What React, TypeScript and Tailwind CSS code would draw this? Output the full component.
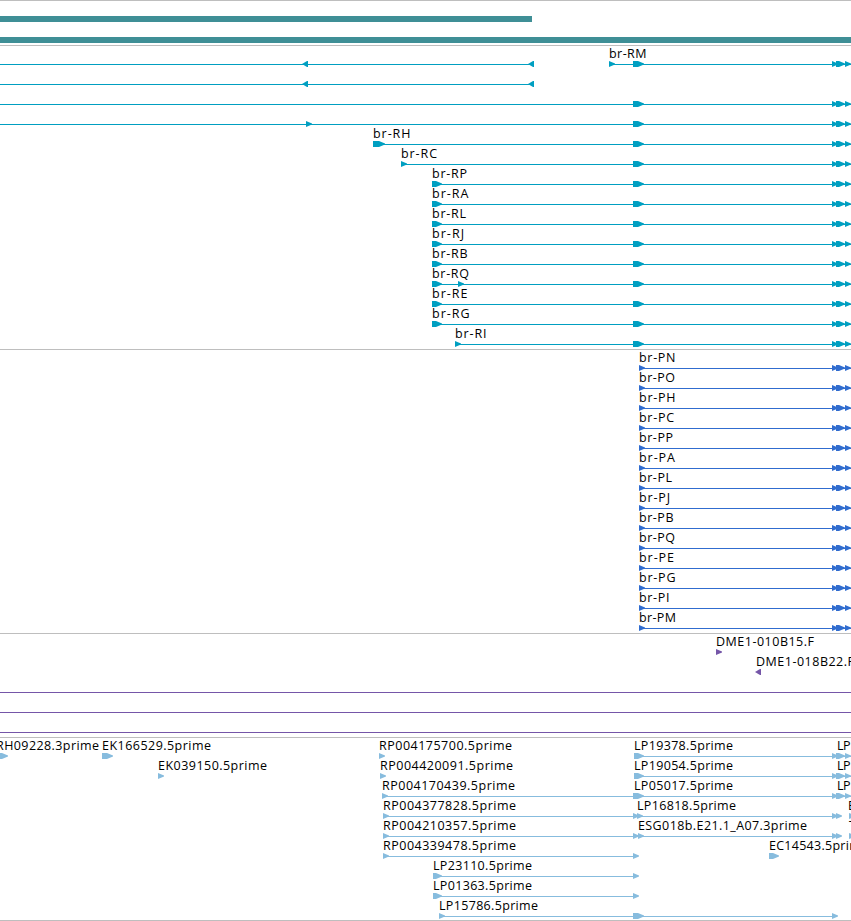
type Glyph = {
  x: number
  w?: number
  left?: boolean
}

type Label = {
  x: number
  w: number
  text: string
}

type Row = {
  labels?: Label[]
  lines?: [number, number][]
  glyphs?: Glyph[]
}

const WIDTH = 851

const acceptors: Glyph[] = [{ x: 832 }, { x: 836, w: 9 }, { x: 845 }]

const transcript = (name: string, w: number, x: number, first?: number, extra: Glyph[] = []): Row => ({
  labels: [{ x, w, text: name }],
  lines: [[x, WIDTH]],
  glyphs: [{ x, w: first }, ...extra, { x: 633, w: 11 }, ...acceptors],
})

const protein = (name: string, w: number): Row => ({
  labels: [{ x: 639, w, text: name }],
  lines: [[639, WIDTH]],
  glyphs: [{ x: 639 }, ...acceptors],
})

const transcripts: Row[] = [
  {
    labels: [{ x: 609, w: 37.5, text: "br-RM" }],
    lines: [[0, 534], [609, WIDTH]],
    glyphs: [{ x: 302, left: true }, { x: 528, left: true }, { x: 609 }, { x: 633, w: 11 }, ...acceptors],
  },
  { lines: [[0, 534]], glyphs: [{ x: 302, left: true }, { x: 528, left: true }] },
  { lines: [[0, WIDTH]], glyphs: [{ x: 633, w: 11 }, ...acceptors] },
  { lines: [[0, WIDTH]], glyphs: [{ x: 306 }, { x: 633, w: 11 }, ...acceptors] },
  transcript("br-RH", 37.5, 373, 12),
  transcript("br-RC", 36, 401),
  transcript("br-RP", 35, 432, 10),
  transcript("br-RA", 36.5, 432, 10),
  transcript("br-RL", 34, 432, 10),
  transcript("br-RJ", 32, 432, 10),
  transcript("br-RB", 35.5, 432, 10),
  transcript("br-RQ", 37, 432, 10, [{ x: 458 }]),
  transcript("br-RE", 35.5, 432, 10),
  transcript("br-RG", 37.5, 432, 10),
  transcript("br-RI", 31.5, 455),
]

const proteins: Row[] = [
  protein("br-PN", 36.5),
  protein("br-PO", 36),
  protein("br-PH", 36.5),
  protein("br-PC", 35),
  protein("br-PP", 34),
  protein("br-PA", 36),
  protein("br-PL", 33),
  protein("br-PJ", 31),
  protein("br-PB", 34.5),
  protein("br-PQ", 36),
  protein("br-PE", 35),
  protein("br-PG", 36.5),
  protein("br-PI", 30.5),
  protein("br-PM", 37),
]

const clones: Row[] = [
  { labels: [{ x: 716, w: 98, text: "DME1-010B15.F" }], glyphs: [{ x: 716 }] },
  { labels: [{ x: 756, w: 98, text: "DME1-018B22.F" }], glyphs: [{ x: 755, left: true }] },
  { lines: [[0, WIDTH]] },
  { lines: [[0, WIDTH]] },
  { lines: [[0, WIDTH]] },
]

const ests: Row[] = [
  {
    labels: [
      { x: -4, w: 103, text: "RH09228.3prime" },
      { x: 102, w: 109, text: "EK166529.5prime" },
      { x: 379, w: 133, text: "RP004175700.5prime" },
      { x: 634, w: 99, text: "LP19378.5prime" },
      { x: 837, w: 13.5, text: "LP" },
    ],
    lines: [[634, WIDTH]],
    glyphs: [{ x: -4, w: 12 }, { x: 102, w: 11 }, { x: 379 }, { x: 634, w: 10 }, ...acceptors],
  },
  {
    labels: [
      { x: 158, w: 109, text: "EK039150.5prime" },
      { x: 380, w: 133, text: "RP004420091.5prime" },
      { x: 634, w: 99, text: "LP19054.5prime" },
      { x: 837, w: 13.5, text: "LP" },
    ],
    lines: [[634, WIDTH]],
    glyphs: [{ x: 158 }, { x: 380 }, { x: 634, w: 10 }, ...acceptors],
  },
  {
    labels: [
      { x: 382, w: 133, text: "RP004170439.5prime" },
      { x: 634, w: 99, text: "LP05017.5prime" },
      { x: 837, w: 13.5, text: "LP" },
    ],
    lines: [[382, WIDTH]],
    glyphs: [{ x: 382 }, { x: 633, w: 11 }, ...acceptors],
  },
  {
    labels: [
      { x: 383, w: 133, text: "RP004377828.5prime" },
      { x: 637, w: 99, text: "LP16818.5prime" },
      { x: 848, w: 7, text: "E" },
    ],
    lines: [[383, 841]],
    glyphs: [{ x: 383 }, { x: 633 }, { x: 637 }, { x: 832 }, { x: 836 }, { x: 849 }],
  },
  {
    labels: [
      { x: 383, w: 133, text: "RP004210357.5prime" },
      { x: 638, w: 169, text: "ESG018b.E21.1_A07.3prime" },
      { x: 849, w: 7, text: "T" },
    ],
    lines: [[383, 841]],
    glyphs: [{ x: 383 }, { x: 633 }, { x: 638 }, { x: 832 }, { x: 836 }, { x: 849 }],
  },
  {
    labels: [
      { x: 383, w: 133, text: "RP004339478.5prime" },
      { x: 769, w: 99, text: "EC14543.5prime" },
    ],
    lines: [[383, 638]],
    glyphs: [{ x: 383 }, { x: 633 }, { x: 769, w: 10 }],
  },
  {
    labels: [{ x: 433, w: 99, text: "LP23110.5prime" }],
    lines: [[433, 638]],
    glyphs: [{ x: 433, w: 9 }, { x: 633 }],
  },
  {
    labels: [{ x: 433, w: 99, text: "LP01363.5prime" }],
    lines: [[433, 638]],
    glyphs: [{ x: 433, w: 9 }, { x: 633 }],
  },
  {
    labels: [{ x: 439, w: 99, text: "LP15786.5prime" }],
    lines: [[439, 837]],
    glyphs: [{ x: 439 }, { x: 633, w: 11 }, { x: 832 }],
  },
]

// 6px tall box, the last 6px taper to the point
const arrow = ({ x, w = 6, left }: Glyph) =>
  left
    ? `M${x + w} 15V21H${x + w - 1}L${x} 18L${x + w - 1} 15Z`
    : `M${x} 15H${x + w - 6}L${x + w} 17.5V18.5L${x + w - 6} 21H${x}Z`

const FeatureRow = ({ labels = [], lines = [], glyphs = [] }: Row) => (
  <svg className="block h-5 w-full overflow-visible fill-current">
    {lines.map(([from, to]) => (
      <rect key={from} x={from} y={18} width={to - from} height={1} />
    ))}
    {glyphs.map((g) => (
      <path key={g.x} d={arrow(g)} />
    ))}
    {labels.map((l) => (
      <text
        key={l.x}
        x={l.x}
        y={12}
        textLength={l.w}
        className="fill-black font-['Open_Sans',sans-serif] text-[12.5px]"
      >
        {l.text}
      </text>
    ))}
  </svg>
)

const Track = ({ rows, className }: { rows: Row[]; className: string }) => (
  <section className={`border-t border-t-[#bebebe] ${className}`}>
    {rows.map((row, i) => (
      <FeatureRow key={i} {...row} />
    ))}
  </section>
)

const App = () => {
  return (
    <main className="w-[851px] h-[921px] overflow-hidden bg-white">
      <section className="flex flex-col gap-[15px] h-[45px] border-t border-[#bebebe] pt-[15px]">
        <div className="h-1.5 w-[532px] shrink-0 bg-[#3f8f96]" />
        <div className="h-1.5 w-full shrink-0 bg-[#3f8f96]" />
      </section>
      <Track rows={transcripts} className="text-[#009fc1] pb-[3px]" />
      <Track rows={proteins} className="text-[#306ccf] pb-[3px]" />
      <Track rows={clones} className="text-[#7556a8] pb-[3px]" />
      <Track rows={ests} className="text-[#87bcde] pb-0.5 border-b border-b-[#bebebe]" />
    </main>
  )
}

export default App
